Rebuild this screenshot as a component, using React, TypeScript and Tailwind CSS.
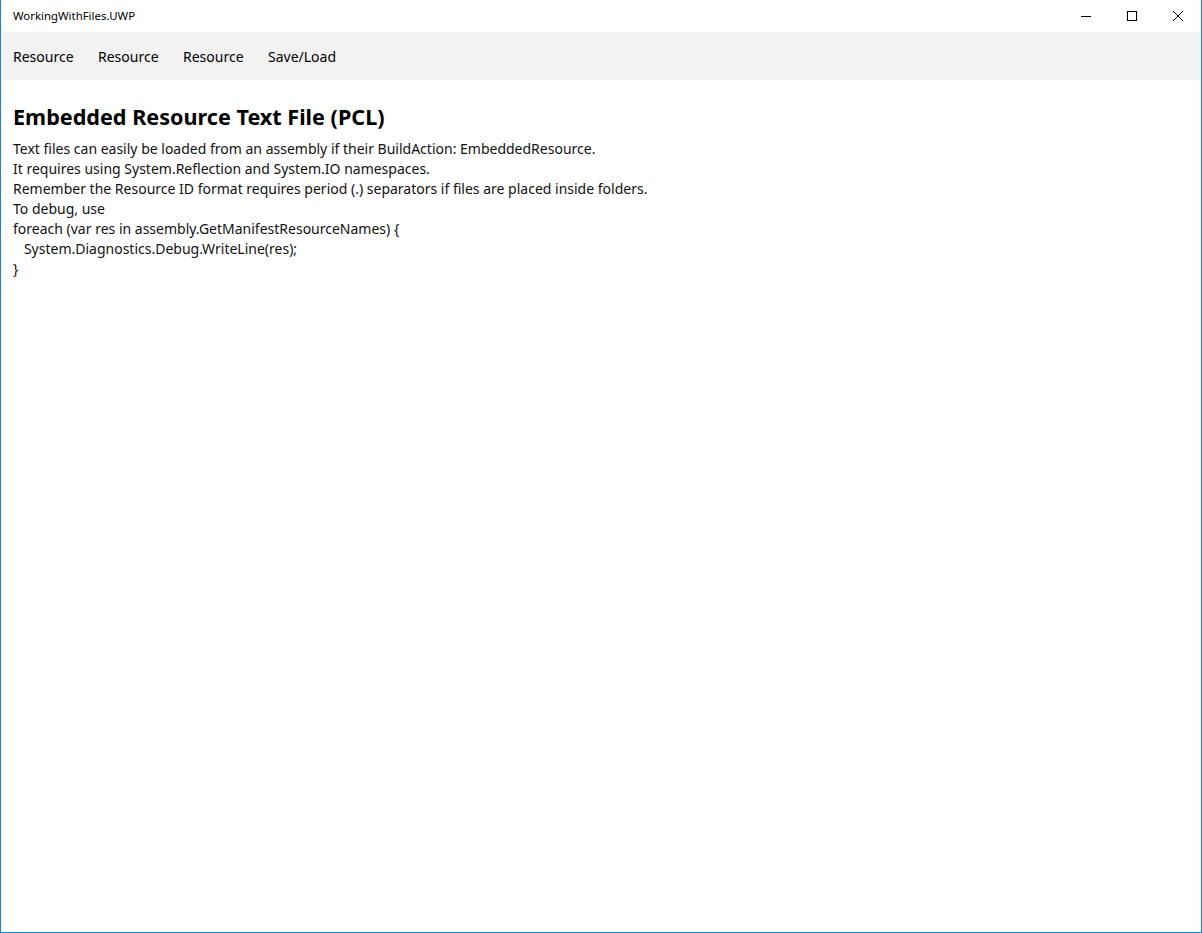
import React from "react";

const tabs = ["Resource", "Resource", "Resource", "Save/Load"];

const lines = [
  "Text files can easily be loaded from an assembly if their BuildAction: EmbeddedResource.",
  "It requires using System.Reflection and System.IO namespaces.",
  "Remember the Resource ID format requires period (.) separators if files are placed inside folders.",
  "To debug, use",
  "foreach (var res in assembly.GetManifestResourceNames) {",
  "\u00a0\u00a0\u00a0System.Diagnostics.Debug.WriteLine(res);",
  "}",
];

export default function App() {
  return (
    <div
      className="h-[933px] w-[1202px] flex flex-col bg-white border-x border-b border-[#1883d7] text-black overflow-hidden"
      style={{ fontFamily: '"Noto Sans", "Open Sans", sans-serif' }}
    >
      {/* title bar */}
      <div className="h-8 flex items-center justify-between">
        <span className="pl-3 text-[11.4px] text-[#000]">WorkingWithFiles.UWP</span>
        <div className="flex h-full">
          <button className="w-[46px] h-full flex items-center justify-center">
            <svg width="10" height="10" viewBox="0 0 10 10">
              <path d="M0 5.5h10" stroke="#000" strokeWidth="1" />
            </svg>
          </button>
          <button className="w-[46px] h-full flex items-center justify-center">
            <svg width="10" height="10" viewBox="0 0 10 10">
              <rect x="0.5" y="0.5" width="9" height="9" fill="none" stroke="#000" strokeWidth="1" />
            </svg>
          </button>
          <button className="w-[46px] h-full flex items-center justify-center">
            <svg width="10" height="10" viewBox="0 0 10 10">
              <path d="M0 0L10 10M10 0L0 10" stroke="#000" strokeWidth="1" />
            </svg>
          </button>
        </div>
      </div>

      {/* tab bar */}
      <div className="h-12 bg-[#f2f2f2] flex items-center pl-3 text-[14px]">
        {tabs.map((t, i) => (
          <span key={i} className="w-[85px]">
            {t}
          </span>
        ))}
      </div>

      {/* content */}
      <div className="px-3 pt-[23px]">
        <h1 className="text-[21.6px] font-bold leading-[28px] mb-[8px]">
          Embedded Resource Text File (PCL)
        </h1>
        <div className="text-sm leading-5 text-[#111]">
          {lines.map((l, i) => (
            <div key={i}>{l}</div>
          ))}
        </div>
      </div>
    </div>
  );
}
